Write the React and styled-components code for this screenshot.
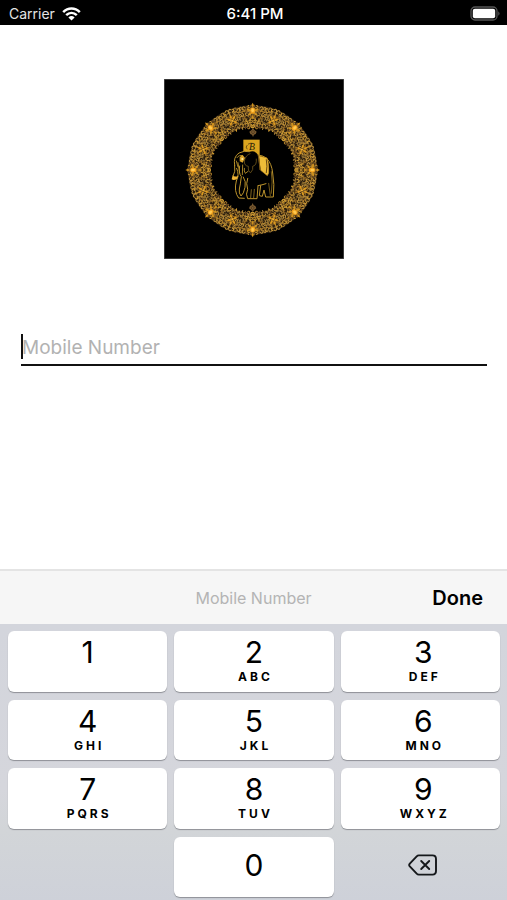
import React, { useState } from "react";
import styled, { createGlobalStyle } from "styled-components";

const GlobalStyle = createGlobalStyle`
  *, *::before, *::after { box-sizing: border-box; }
  body {
    margin: 0;
    background: #fff;
    color: #000;
    font-family: Inter, "Liberation Sans", sans-serif;
  }
  button, input { font: inherit; color: inherit; }
`;

const Screen = styled.div`
  display: flex;
  flex-direction: column;
  min-height: 100vh;
`;

const StatusBar = styled.header`
  display: grid;
  grid-template-columns: 1fr auto 1fr;
  align-items: center;
  height: 25px;
  padding: 2px 6px 0 9px;
  background: #000;
  color: #fff;
  font-size: 14px;
  line-height: 20px;
`;

const Carrier = styled.div`
  display: flex;
  align-items: center;
  gap: 7px;
  color: #e4e4e4;
`;

const Clock = styled.time`
  font-size: 15px;
  font-weight: 500;
`;

const BatterySlot = styled.div`
  display: flex;
  justify-content: flex-end;
`;

const Content = styled.main`
  flex: 1;
  display: flex;
  flex-direction: column;
  align-items: center;
  padding: 54px 20px 0 21px;
`;

const Logo = styled.svg`
  display: block;
  width: 180px;
  height: 180px;
  background: #000;
`;

const Field = styled.label`
  position: relative;
  display: block;
  width: 100%;
  margin-top: 71px;
  border-bottom: 2px solid #111;
`;

const Caret = styled.span`
  position: absolute;
  left: 0;
  top: 4px;
  width: 2px;
  height: 25px;
  background: #111;
`;

const NumberInput = styled.input`
  display: block;
  width: 100%;
  height: 34px;
  padding: 0 0 0 1px;
  border: 0;
  outline: 0;
  background: transparent;
  caret-color: transparent;
  font-size: 19px;
  &::placeholder { color: #b2b2b2; opacity: 1; }
`;

const Accessory = styled.div`
  display: grid;
  grid-template-columns: 1fr auto 1fr;
  align-items: center;
  height: 55px;
  padding: 0 24px;
  border-top: 2px solid #e4e4e4;
  background: #f6f6f6;
`;

const Hint = styled.span`
  grid-column: 2;
  color: #b4b4b4;
  font-size: 16px;
`;

const DoneButton = styled.button`
  justify-self: end;
  padding: 0;
  border: 0;
  background: none;
  font-size: 20px;
  font-weight: 600;
`;

const Keypad = styled.div`
  display: grid;
  grid-template-columns: repeat(3, 1fr);
  grid-template-rows: repeat(4, 1fr);
  gap: 8px 7px;
  height: 276px;
  padding: 7px 7px 3px 8px;
  background: linear-gradient(#d3d5dc, #d5d6dc 60%, #d2d5d8 75%, #ced1d9);

  & > :nth-child(3n), & > :last-child { padding-left: 6px; }
`;

const Key = styled.button`
  display: flex;
  flex-direction: column;
  align-items: center;
  justify-content: ${(p) => (p.$centered ? "center" : "flex-start")};
  padding: ${(p) => (p.$centered ? "0 0 3px" : "3px 0 0")};
  border: 0;
  border-radius: 6px;
  background: #fff;
  box-shadow: 0 1px 1px #8e9096;
`;

const ZeroKey = styled(Key)`
  grid-column: 2;
`;

const Digit = styled.span`
  font-size: 30px;
  line-height: 36px;
`;

const Letters = styled.span`
  padding-left: 3px;
  font-size: 12px;
  font-weight: 700;
  line-height: 14px;
  letter-spacing: 3px;
`;

const DeleteKey = styled.button`
  grid-column: 3;
  display: flex;
  align-items: center;
  justify-content: center;
  padding: 0 0 3px;
  border: 0;
  background: none;
`;

function WifiIcon() {
  return (
    <svg width="19" height="14" viewBox="0 0 19 14" aria-hidden="true">
      <g fill="none" stroke="#fff" strokeWidth="2.5">
        <path d="M1.2 5.1C6 0.2 13 0.2 17.8 5.1" />
        <path d="M4.2 8.2C7.3 5.1 11.7 5.1 14.8 8.2" />
      </g>
      <path d="M6.4 10.4Q9.5 7.8 12.6 10.4L9.5 13.6Z" fill="#fff" />
    </svg>
  );
}

function BatteryIcon() {
  return (
    <svg width="31" height="15" viewBox="0 0 31 15" aria-hidden="true">
      <rect x="1" y="1" width="26" height="13" rx="4" fill="none" stroke="#555" strokeWidth="1.3" />
      <rect x="2.8" y="2.8" width="22.4" height="9.4" rx="2" fill="#fff" />
      <path d="M28.4 5.2Q30.6 7.5 28.4 9.8Z" fill="#666" />
    </svg>
  );
}

function DeleteIcon() {
  return (
    <svg width="30" height="22" viewBox="0 0 30 22" aria-hidden="true" fill="none" stroke="#15181b" strokeWidth="1.9" strokeLinecap="round" strokeLinejoin="round">
      <path d="M10.8 1.4H24.5Q28 1.4 28 4.9V17.1Q28 20.6 24.5 20.6H10.8Q9.6 20.6 8.7 19.7L1.8 12.4Q0.6 11 1.8 9.6L8.7 2.3Q9.6 1.4 10.8 1.4Z" />
      <path d="M13.2 7L21.2 15M21.2 7L13.2 15" />
    </svg>
  );
}

const GOLDS = ["#b5842c", "#8d6424", "#cd9a33", "#775324", "#9a7836", "#be923c"];

// Filigree for half of a petal; mirrored and repeated to close the ring.
function makeFiligree() {
  let seed = 29;
  const next = () => {
    seed = (seed * 16807) % 2147483647;
    return seed / 2147483647;
  };
  const curls = [];
  for (let r = 129; r <= 196; r += 7.5) {
    const count = Math.round(r / 21);
    for (let i = 0; i < count; i++) {
      const angle = ((i + 0.2 + next() * 0.6) / count) * (Math.PI / 8);
      const radius = r + next() * 5 - 2;
      curls.push({
        x: Math.sin(angle) * radius,
        y: -Math.cos(angle) * radius,
        size: 3 + next() * 2.4,
        turn: next() * 360,
        color: GOLDS[Math.floor(next() * GOLDS.length)],
      });
    }
  }
  return curls;
}

const FILIGREE = makeFiligree();
const EIGHTHS = [0, 45, 90, 135, 180, 225, 270, 315];

function HalfPetal() {
  return (
    <g fill="none" strokeLinecap="round">
      {FILIGREE.map((c, i) => (
        <path
          key={i}
          transform={`translate(${c.x} ${c.y}) rotate(${c.turn})`}
          d={`M${-c.size} 1Q${-c.size} ${-c.size} 0 ${-c.size * 0.7}T${c.size} ${c.size * 0.7}`}
          stroke={c.color}
          strokeWidth="3"
        />
      ))}
    </g>
  );
}

function Flower() {
  return (
    <g>
      <g fill="#cf921f">
        <ellipse cx="-12" cy="-181" rx="6" ry="3.4" transform="rotate(25 -12 -181)" />
        <ellipse cx="12" cy="-181" rx="6" ry="3.4" transform="rotate(-25 12 -181)" />
        <ellipse cx="-9" cy="-168" rx="5" ry="3" transform="rotate(-35 -9 -168)" />
        <ellipse cx="9" cy="-168" rx="5" ry="3" transform="rotate(35 9 -168)" />
        <path d="M0-202L4-194L0-188L-4-194Z" />
        <path d="M0-165L3-158L0-151L-3-158Z" />
      </g>
      <ellipse cy="-178" rx="7.5" ry="9.5" fill="#f0a01c" />
      <ellipse cy="-179" rx="4" ry="6" fill="#ffc94f" />
      <g transform="rotate(22.5)" fill="#dc9a20">
        <ellipse cx="-8" cy="-166" rx="6" ry="3" transform="rotate(35 -8 -166)" />
        <ellipse cx="8" cy="-166" rx="6" ry="3" transform="rotate(-35 8 -166)" />
        <ellipse cx="-7" cy="-153" rx="5" ry="3" transform="rotate(-40 -7 -153)" />
        <ellipse cx="7" cy="-153" rx="5" ry="3" transform="rotate(40 7 -153)" />
        <ellipse cy="-172" rx="3" ry="5" />
        <circle cy="-160" r="3" fill="#f2b236" />
      </g>
    </g>
  );
}

function Finial() {
  return (
    <g fill="#79592f">
      <path d="M0-13L5-7L11-3L8 4L3 6L0 13L-3 6L-8 4L-11-3L-5-7Z" />
      <path d="M-5-2L0-7L5-2L0 4Z" fill="none" stroke="#332515" strokeWidth="1.5" />
    </g>
  );
}

function Elephant() {
  return (
    <g strokeLinecap="round" strokeLinejoin="round">
      <rect x="250" y="194" width="49" height="47" fill="#dca51f" />
      <text x="276" y="225" textAnchor="middle" fontFamily="Liberation Serif, serif" fontStyle="italic" fontSize="29" fill="#241a08">B</text>
      <path d="M261 211Q255 216 261 222M265 207Q272 203 279 205" fill="none" stroke="#3b2a0c" strokeWidth="2" />
      <path d="M224 270Q220 243 238 233Q252 225 269 230Q284 225 294 239Q333 247 339 280L340 366H325L320 333L304 330L300 366L292 370H270L261 345L252 368L238 370Q226 348 229 318Z" fill="#000" />
      <g fill="none" stroke="#bd942c" strokeWidth="3">
        <path d="M224 271Q219 246 237 234Q252 226 268 230" />
        <path d="M224 271Q227 291 220 302M230 280Q239 299 229 318Q221 349 236 369L253 370" />
        <path d="M239 273Q235 294 244 305Q241 330 238 342Q236 355 243 363Q251 357 255 337Q259 319 250 306" />
        <path d="M263 310Q257 326 263 343Q256 358 263 371H291L294 333" />
        <path d="M274 344L272 368M283 343L281 368" strokeWidth="2" />
        <path d="M294 332Q306 330 318 326M302 332L298 362L307 364L312 345L317 366H340Q344 326 338 294Q335 265 320 250Q309 241 294 240" />
        <path d="M326 325L331 362M334 290Q339 319 334 355" strokeWidth="1.8" />
        <path d="M270 236Q257 240 253 258Q252 272 265 274Q264 291 272 293Q281 284 278 274Q291 271 289 252" stroke="#8d6d22" strokeWidth="2" />
        <path d="M231 248Q236 239 248 242M229 258L234 276M234 263L239 294M248 270L247 299M253 280Q251 289 256 295L264 289" strokeWidth="2.6" />
      </g>
      <path d="M239 246L248 240L255 249L248 263L239 259Z" fill="#dba52b" />
      <circle cx="247" cy="252" r="3" fill="#fff0a4" />
      <path d="M218 301Q224 308 236 302L230 313Q220 317 215 313Z" fill="#efb536" />
      <path d="M296 242L321 249Q328 266 326 294L322 302L302 286Z" fill="#edbd38" stroke="#bd8820" strokeWidth="2" />
      <path d="M319 254Q323 274 319 293" fill="none" stroke="#67480f" strokeWidth="3" />
      <path d="M296 243L300 284" stroke="#7a5715" strokeWidth="3" />
    </g>
  );
}

function BrandLogo() {
  return (
    <Logo viewBox="12 12 540 540" role="img" aria-label="Golden elephant emblem">
      <rect x="13" y="13" width="538" height="538" fill="#000" stroke="#555" strokeWidth="2" />
      <g transform="translate(278 285)">
        <circle r="161" fill="none" stroke="#2c1f0f" strokeWidth="66" />
        {EIGHTHS.map((a) => (
          <g key={a} transform={`rotate(${a})`}>
            <HalfPetal />
            <g transform="scale(-1 1)"><HalfPetal /></g>
          </g>
        ))}
        {EIGHTHS.map((a) => (
          <g key={a} transform={`rotate(${a})`}><Flower /></g>
        ))}
      </g>
      <g transform="translate(279 173)"><Finial /></g>
      <g transform="translate(278 397) rotate(180)"><Finial /></g>
      <Elephant />
    </Logo>
  );
}

const KEYS = [
  ["1", ""], ["2", "ABC"], ["3", "DEF"],
  ["4", "GHI"], ["5", "JKL"], ["6", "MNO"],
  ["7", "PQRS"], ["8", "TUV"], ["9", "WXYZ"],
];

export default function App() {
  const [number, setNumber] = useState("");
  const press = (digit) => setNumber((n) => n + digit);

  return (
    <Screen>
      <GlobalStyle />
      <StatusBar>
        <Carrier>Carrier <WifiIcon /></Carrier>
        <Clock>6:41 PM</Clock>
        <BatterySlot><BatteryIcon /></BatterySlot>
      </StatusBar>
      <Content>
        <BrandLogo />
        <Field>
          {number === "" && <Caret />}
          <NumberInput
            type="tel"
            aria-label="Mobile Number"
            placeholder="Mobile Number"
            value={number}
            onChange={(e) => setNumber(e.target.value)}
          />
        </Field>
      </Content>
      <Accessory>
        <Hint>Mobile Number</Hint>
        <DoneButton type="button">Done</DoneButton>
      </Accessory>
      <Keypad>
        {KEYS.map(([digit, letters]) => (
          <Key key={digit} type="button" onClick={() => press(digit)}>
            <Digit>{digit}</Digit>
            {letters && <Letters>{letters}</Letters>}
          </Key>
        ))}
        <ZeroKey $centered type="button" onClick={() => press("0")}>
          <Digit>0</Digit>
        </ZeroKey>
        <DeleteKey type="button" aria-label="Delete" onClick={() => setNumber((n) => n.slice(0, -1))}>
          <DeleteIcon />
        </DeleteKey>
      </Keypad>
    </Screen>
  );
}
